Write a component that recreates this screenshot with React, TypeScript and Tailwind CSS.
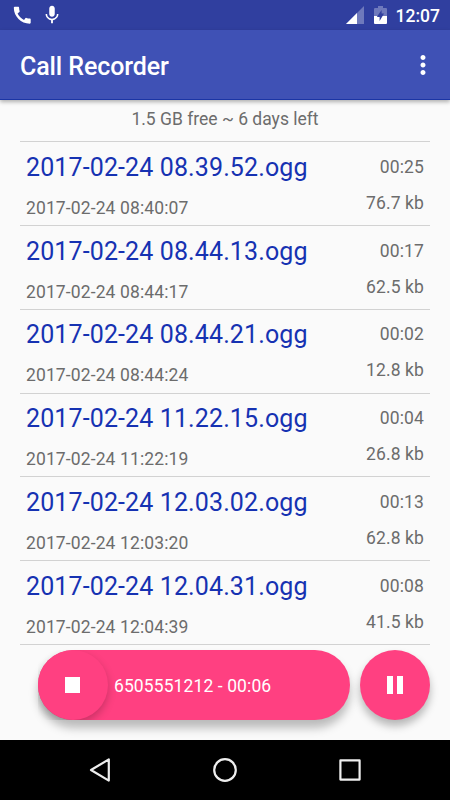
import React from 'react';
import { MdCall, MdMic, MdMoreVert } from 'react-icons/md';

interface Recording {
  name: string;
  date: string;
  duration: string;
  size: string;
}

const recordings: Recording[] = [
  { name: '2017-02-24 08.39.52.ogg', date: '2017-02-24 08:40:07', duration: '00:25', size: '76.7 kb' },
  { name: '2017-02-24 08.44.13.ogg', date: '2017-02-24 08:44:17', duration: '00:17', size: '62.5 kb' },
  { name: '2017-02-24 08.44.21.ogg', date: '2017-02-24 08:44:24', duration: '00:02', size: '12.8 kb' },
  { name: '2017-02-24 11.22.15.ogg', date: '2017-02-24 11:22:19', duration: '00:04', size: '26.8 kb' },
  { name: '2017-02-24 12.03.02.ogg', date: '2017-02-24 12:03:20', duration: '00:13', size: '62.8 kb' },
  { name: '2017-02-24 12.04.31.ogg', date: '2017-02-24 12:04:39', duration: '00:08', size: '41.5 kb' },
];

const StatusBar: React.FC = () => (
  <div className="flex h-[30px] shrink-0 items-center bg-[#303f9f] pl-[11px] pr-[10px] text-white">
    <MdCall className="size-[22.5px]" />
    <MdMic className="ml-[7.5px] size-[22px]" />
    <svg className="ml-auto h-[18px] w-[18px]" viewBox="0 0 18 18">
      <path d="M18 0v18H0z" fill="#fff" fillOpacity=".3" />
      <path d="M11 7v11H0z" fill="#fff" />
    </svg>
    <svg className="ml-[10px] h-[18px] w-[13px]" viewBox="0 0 13 18">
      <path
        d="M4 0h5v2h3q1 0 1 1v7H8.6L10 7.4H7.6V4L3.4 10H0V3q0-1 1-1h3z"
        fill="#fff"
        fillOpacity=".3"
      />
      <path d="M0 10h3.2v.9h2.4V15L8.6 10H13v7q0 1-1 1H1q-1 0-1-1z" fill="#fff" />
    </svg>
    <span className="ml-[9px] pt-px text-[17.5px] font-medium leading-[20px]">12:07</span>
  </div>
);

const AppBar: React.FC = () => (
  <div className="z-10 flex h-[70px] shrink-0 items-center justify-between border-b border-[#1b35a5] bg-[#3f51b5] pl-5 pr-[12.5px] text-white shadow-[0_2px_4px_rgba(0,0,0,0.3)]">
    <h1 className="pt-[4px] text-[25px] font-medium leading-[30px] tracking-[-0.1px]">Call Recorder</h1>
    <MdMoreVert className="size-[30px]" />
  </div>
);

const RecordingRow: React.FC<{ item: Recording }> = ({ item }) => (
  <li className="flex h-[83.75px] justify-between border-b border-[#d2d2d2] pl-[6px] pr-[6px]">
    <div className="flex flex-col gap-[15px] pt-[10.5px]">
      <span className="text-[25px] leading-[30px] tracking-[0.12px] text-[#1632b2]">{item.name}</span>
      <span className="text-[17.5px] leading-[20px] tracking-[0.12px]">{item.date}</span>
    </div>
    <div className="flex flex-col gap-4 pt-[14.5px] text-right text-[17.5px] leading-[20px] tracking-[0.12px]">
      <span>{item.duration}</span>
      <span>{item.size}</span>
    </div>
  </li>
);

const RecordingControls: React.FC = () => (
  <div className="flex gap-[10px] pl-[37.5px] pt-[5.25px] text-white">
    <div className="h-[70px] w-[312.5px] rounded-full bg-[#ff4081] shadow-[0_8px_10px_rgba(0,0,0,0.26)]">
      {/* the button's shadow is cut off at the square edge of the pill */}
      <div className="flex h-full items-center overflow-hidden">
        <button className="flex size-[70px] items-center justify-center rounded-full bg-[#ff4081] shadow-[0_4px_8px_rgba(0,0,0,0.22)]">
          <span className="size-[15.5px] bg-white" />
        </button>
        <span className="ml-[6.5px] pt-px text-[17.5px] leading-[20px] tracking-[0.1px]">6505551212 - 00:06</span>
      </div>
    </div>
    <button className="flex size-[70px] items-center justify-center gap-[4.5px] rounded-full bg-[#ff4081] shadow-[0_6px_9px_rgba(0,0,0,0.28)]">
      <span className="h-[18px] w-[6px] bg-white" />
      <span className="h-[18px] w-[6px] bg-white" />
    </button>
  </div>
);

const NavBar: React.FC = () => (
  <div className="flex h-[60px] shrink-0 items-center justify-between bg-black px-[84px]">
    <svg className="size-8" viewBox="0 0 32 32" fill="none" stroke="#eee" strokeWidth="2.2" strokeLinejoin="round">
      <path d="M7 16 24.8 5.4v21.2z" />
    </svg>
    <svg className="size-8" viewBox="0 0 32 32" fill="none" stroke="#eee" strokeWidth="2.2">
      <circle cx="16" cy="16" r="10.8" />
    </svg>
    <svg className="size-8" viewBox="0 0 32 32" fill="none" stroke="#eee" strokeWidth="2.2" strokeLinejoin="round">
      <path d="M6.4 6.4h19.2v19.2H6.4z" />
    </svg>
  </div>
);

const App: React.FC = () => {
  return (
    <div className="flex h-[800px] w-[450px] flex-col overflow-hidden bg-[#fafafa] font-['Roboto',sans-serif] text-[#6c6c6c]">
      <StatusBar />
      <AppBar />
      <main className="min-h-0 flex-1">
        <p className="h-[41.25px] pt-[9px] text-center text-[17.5px] leading-[20px]">1.5 GB free ~ 6 days left</p>
        <ul className="mx-5 border-t border-[#d2d2d2]">
          {recordings.map((item) => (
            <RecordingRow key={item.name} item={item} />
          ))}
        </ul>
        <RecordingControls />
      </main>
      <NavBar />
    </div>
  );
};

export default App;
